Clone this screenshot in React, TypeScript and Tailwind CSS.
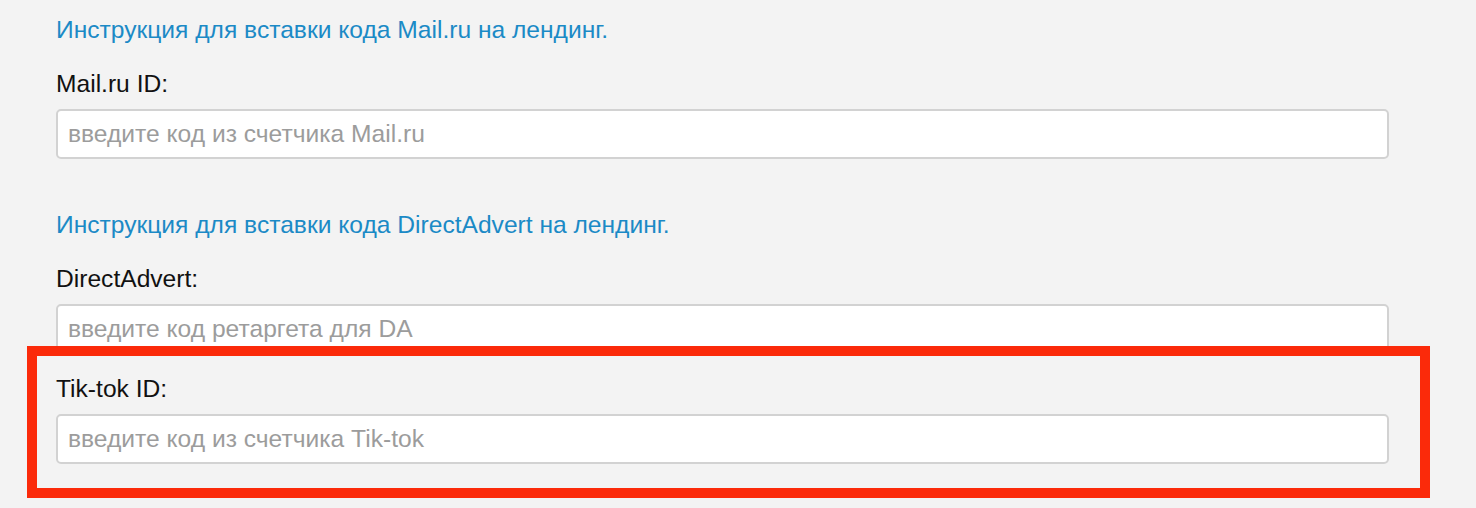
const fields = [
  {
    link: "Инструкция для вставки кода Mail.ru на лендинг.",
    label: "Mail.ru ID:",
    placeholder: "введите код из счетчика Mail.ru",
  },
  {
    link: "Инструкция для вставки кода DirectAdvert на лендинг.",
    label: "DirectAdvert:",
    placeholder: "введите код ретаргета для DA",
  },
  {
    label: "Tik-tok ID:",
    placeholder: "введите код из счетчика Tik-tok",
  },
];

export default function App() {
  return (
    <div
      className="relative h-[508px] w-full overflow-hidden bg-[#f3f3f3] pt-[16px] pl-[56px] text-[24.6px] leading-7"
      style={{ fontFamily: '"Liberation Sans", Arial, sans-serif' }}
    >
      <div className="flex w-[1333px] flex-col">
        {fields.map((f, i) => (
          <div key={f.label} className={i === 1 ? "mt-[31px] flex flex-col" : "flex flex-col"}>
            {f.link && (
              <a href="#" className="mb-[26px] block text-[#1b8ac6]">
                {f.link}
              </a>
            )}
            <div className="mb-[21px] flex flex-col">
              <label className="mb-[11px] block text-[#111]">{f.label}</label>
              <input
                type="text"
                placeholder={f.placeholder}
                className="block h-[50px] w-full rounded-[5px] border-2 border-[#d2d2d2] bg-white px-[10px] text-[24.6px] text-[#333] outline-none placeholder:text-[#9c9c9c]"
              />
            </div>
          </div>
        ))}
      </div>

      {/* highlight frame */}
      <div className="pointer-events-none absolute left-[27px] top-[346px] h-[152px] w-[1403px] border-[10px] border-[#fb2a0a]" />
    </div>
  );
}
